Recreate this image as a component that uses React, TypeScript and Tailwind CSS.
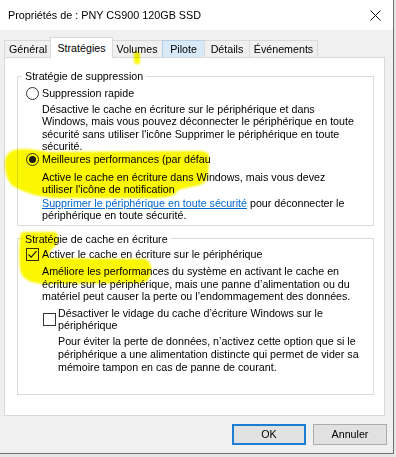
import React from "react";

const tabs = [
  { label: "Général", w: "w-[48px]", cls: "" },
  { label: "Stratégies", w: "w-[63px]", cls: "selected" },
  { label: "Volumes", w: "w-[52px]", cls: "-ml-[2px]" },
  { label: "Pilote", w: "w-[43px]", cls: "-ml-px hover" },
  { label: "Détails", w: "w-[46px]", cls: "-ml-px" },
  { label: "Événements", w: "w-[69px]", cls: "-ml-px" },
];

function Radio({ checked }: { checked?: boolean }) {
  return (
    <span className="w-[13px] h-[13px] rounded-full border border-[#333] bg-white flex items-center justify-center shrink-0">
      {checked && <span className="w-[7px] h-[7px] rounded-full bg-[#1a1a1a]" />}
    </span>
  );
}

function Check({ checked }: { checked?: boolean }) {
  return (
    <span className="w-[13px] h-[13px] border border-[#333] bg-white flex items-center justify-center shrink-0">
      {checked && (
        <svg width="11" height="11" viewBox="0 0 11 11">
          <path d="M1.5 5.5 L4.2 8.2 L9.5 2.2" fill="none" stroke="#1a1a1a" strokeWidth="1.2" />
        </svg>
      )}
    </span>
  );
}

export default function App() {
  return (
    <div className="relative w-[396px] h-[457px] overflow-hidden bg-[#e6e6e6] font-['Liberation_Sans',Arial,sans-serif] text-[10.7px] leading-[12.5px] text-black">
      <div className="w-[394px] h-[454px] bg-[#f0f0f0] border-r border-b border-[#707070] flex flex-col">
        {/* title bar */}
        <div className="h-[30px] bg-white flex items-center justify-between pl-[8px] pr-[12px] shrink-0">
          <span className="text-[10.8px]">Propriétés de : PNY CS900 120GB SSD</span>
          <svg width="11" height="11" viewBox="0 0 11 11">
            <path d="M0.5 0.5 L10.5 10.5 M10.5 0.5 L0.5 10.5" stroke="#111" strokeWidth="1" />
          </svg>
        </div>

        {/* tabs */}
        <div className="h-[28px] flex items-end pl-[4px] shrink-0">
          {tabs.map((t) =>
            t.cls === "selected" ? (
              <div
                key={t.label}
                className={`relative z-10 -ml-[2px] ${t.w} h-[21px] bg-white border border-b-0 border-[#d9d9d9] flex items-center justify-center`}
              >
                {t.label}
              </div>
            ) : (
              <div
                key={t.label}
                className={`${t.w} h-[18px] border border-b-0 flex items-center justify-center ${
                  t.cls.includes("hover") ? "bg-[#d8e9f8] border-[#b3d0ea]" : "bg-[#f0f0f0] border-[#d9d9d9]"
                } ${t.cls.replace("hover", "")}`}
              >
                {t.label}
              </div>
            )
          )}
        </div>

        {/* panel */}
        <div className="-mt-px ml-[4px] w-[381px] h-[359px] bg-white border border-[#d9d9d9] pl-[12px] pt-[12px] shrink-0">
          <fieldset className="w-[357px] border border-[#dcdcdc] pb-[3px]">
            <legend className="ml-[4px] px-[3px]">Stratégie de suppression</legend>
            <div className="pt-[4px] pl-[8px] flex items-center gap-[3px]">
              <Radio />
              <span>Suppression rapide</span>
            </div>
            <p className="mt-[3px] pl-[24px] whitespace-nowrap">
              Désactive le cache en écriture sur le périphérique et dans
              <br />
              Windows, mais vous pouvez déconnecter le périphérique en toute
              <br />
              sécurité sans utiliser l'icône Supprimer le périphérique en toute
              <br />
              sécurité.
            </p>
            <div className="pl-[8px] flex items-center gap-[3px]">
              <Radio checked />
              <span>Meilleures performances (par défau</span>
            </div>
            <p className="mt-[5px] pl-[24px] whitespace-nowrap">
              Active le cache en écriture dans Windows, mais vous devez
              <br />
              utiliser l'icône de notification
            </p>
            <p className="mt-[1px] pl-[24px] whitespace-nowrap">
              <span className="text-[#0066cc] underline">Supprimer le périphérique en toute sécurité</span> pour
              déconnecter le
              <br />
              périphérique en toute sécurité.
            </p>
          </fieldset>

          <fieldset className="mt-[7px] w-[357px] h-[162px] border border-[#dcdcdc]">
            <legend className="ml-[4px] px-[3px]">Stratégie de cache en écriture</legend>
            <div className="pt-[3px] pl-[8px] flex items-center gap-[3px]">
              <Check checked />
              <span>Activer le cache en écriture sur le périphérique</span>
            </div>
            <p className="mt-[4px] pl-[24px] whitespace-nowrap">
              Améliore les performances du système en activant le cache en
              <br />
              écriture sur le périphérique, mais une panne d’alimentation ou du
              <br />
              matériel peut causer la perte ou l’endommagement des données.
            </p>
            <div className="mt-[4px] pl-[25px] flex items-center gap-[2px]">
              <Check />
              <span className="whitespace-nowrap">
                Désactiver le vidage du cache d’écriture Windows sur le
                <br />
                périphérique
              </span>
            </div>
            <p className="mt-[3px] pl-[40px] whitespace-nowrap leading-[13px]">
              Pour éviter la perte de données, n’activez cette option que si le
              <br />
              périphérique a une alimentation distincte qui permet de vider sa
              <br />
              mémoire tampon en cas de panne de courant.
            </p>
          </fieldset>
        </div>

        {/* buttons */}
        <div className="mt-[8px] flex justify-end gap-[7px] pr-[6px]">
          <button className="w-[74px] h-[21px] bg-[#e1e1e1] border-2 border-[#1a7fd4] flex items-center justify-center">
            OK
          </button>
          <button className="w-[74px] h-[21px] bg-[#e1e1e1] border border-[#adadad] flex items-center justify-center">
            Annuler
          </button>
        </div>
      </div>

      {/* highlighter marks */}
      <svg
        className="absolute inset-0 pointer-events-none mix-blend-multiply"
        width="396"
        height="457"
        viewBox="0 0 396 457"
      >
        <defs>
          <filter id="soft" x="-5%" y="-5%" width="110%" height="110%">
            <feGaussianBlur stdDeviation="0.8" />
          </filter>
        </defs>
        <g fill="#fbf700" filter="url(#soft)">
          <path d="M134 52 C136 50 140 51 140 54 L140 62 C140 65 135 65 134 62 Z" />
          <path d="M5 163 C5 153 12 149 22 149 C34 149 40 151 48 152 L200 151 C208 151 210 155 209 160 L208 176 C207 183 200 186 190 187 L178 190 C176 196 168 198 150 198 L60 198 C42 198 24 193 13 186 C7 181 5 172 5 163 Z" />
          <path d="M24 232 L55 232 C59 233 59 244 55 246 C50 250 47 255 50 258 L144 259 C150 260 152 266 151 272 C150 280 146 283 140 283 L42 284 C32 283 24 280 21 273 C19 265 19 250 20 240 C20 235 21 232 24 232 Z" />
        </g>
      </svg>
    </div>
  );
}
